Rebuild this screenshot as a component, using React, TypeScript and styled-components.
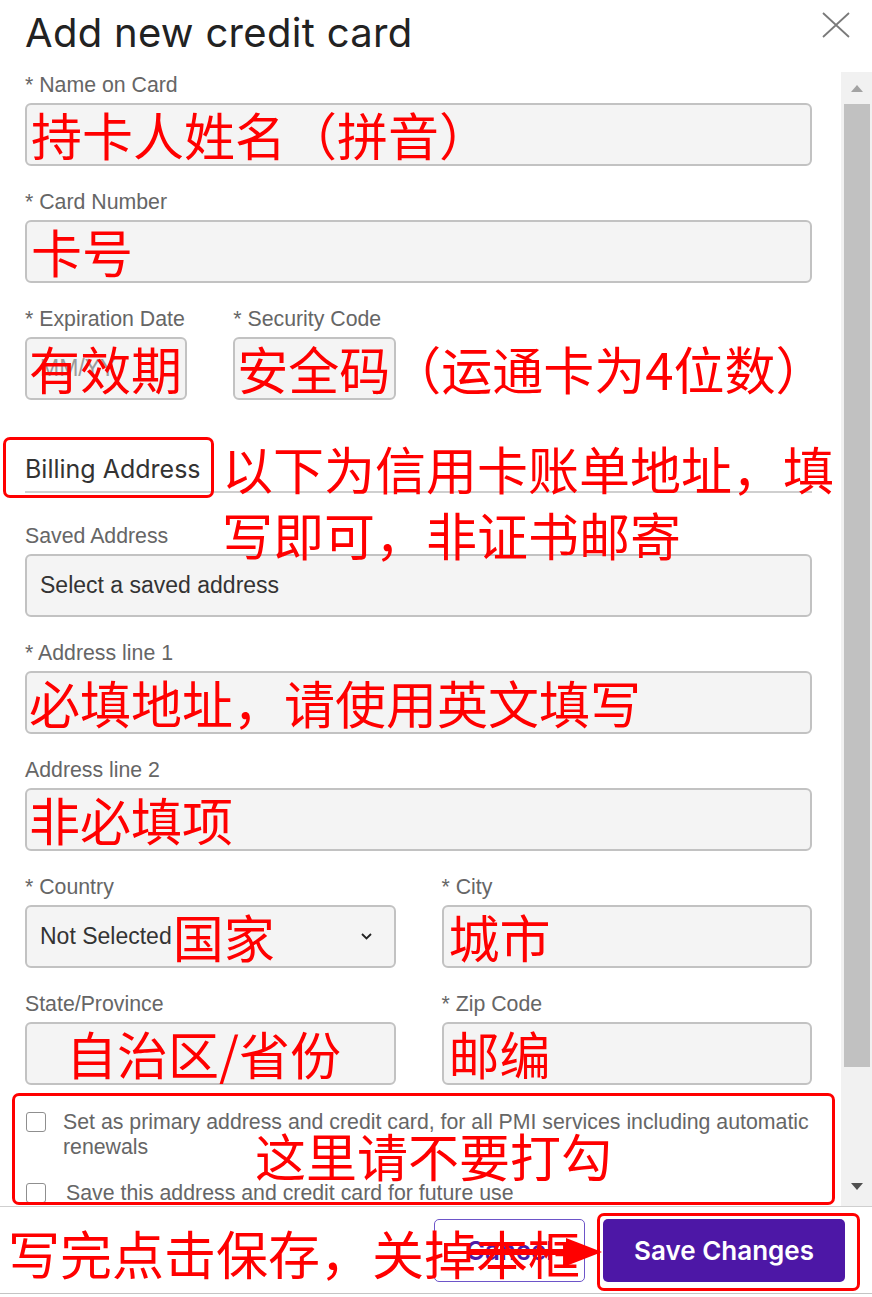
import styled, { createGlobalStyle } from "styled-components";

const RED = "#ff0000";
const CJK = `"Noto Sans CJK SC", "Noto Sans", sans-serif`;
const HEAD = `Inter, "Liberation Sans", sans-serif`;

const GlobalStyle = createGlobalStyle`
  html, body {
    margin: 0;
    padding: 0;
    background: #fff;
  }
  body {
    font-family: "Liberation Sans", Arial, sans-serif;
  }
  * {
    box-sizing: border-box;
  }
`;

const Modal = styled.div`
  width: 872px;
  height: 1297px;
  display: flex;
  flex-direction: column;
  overflow: hidden;
  background: #fff;
`;

const Header = styled.header`
  height: 72px;
  flex: none;
  display: flex;
  justify-content: space-between;
  align-items: flex-start;
  padding: 0 22px 0 25px;
`;

const Title = styled.h1`
  margin: 12px 0 0;
  font-family: ${HEAD};
  font-size: 40px;
  font-weight: 400;
  line-height: 42px;
  letter-spacing: 0.3px;
  color: #222;
`;

const CloseButton = styled.button`
  margin-top: 12px;
  width: 28px;
  height: 26px;
  padding: 0;
  border: 0;
  background: none;
  display: flex;
`;

const Body = styled.div`
  height: 1134px;
  flex: none;
  display: flex;
`;

const Content = styled.div`
  flex: 1;
  min-width: 0;
  overflow: hidden;
  padding: 1px 29px 0 25px;
`;

const Form = styled.div`
  display: grid;
  grid-template-columns: repeat(4, 1fr);
  column-gap: 46px;
  row-gap: 24px;
`;

const Field = styled.div<{ $span?: number }>`
  grid-column: span ${(p) => p.$span ?? 4};
  display: flex;
  flex-direction: column;
  min-width: 0;
`;

const Label = styled.label`
  margin-bottom: 6px;
  font-size: 21.3px;
  line-height: 24px;
  color: #666;
  white-space: nowrap;
`;

const Box = styled.div`
  position: relative;
  height: 63px;
  display: flex;
  align-items: center;
  padding: 0 2px;
  border: 2px solid #c2c2c2;
  border-radius: 6px;
  background: #f4f4f4;
  white-space: nowrap;
`;

const Value = styled.span<{ $muted?: boolean }>`
  margin-left: 11px;
  font-size: 23px;
  color: ${(p) => (p.$muted ? "#9a9a9a" : "#333")};
`;

const Note = styled.span<{ $indent?: number; $over?: boolean }>`
  margin-left: ${(p) => p.$indent ?? 2}px;
  font-family: ${CJK};
  font-size: 51px;
  line-height: 1;
  color: ${RED};
  white-space: nowrap;
  ${(p) => (p.$over ? "position: absolute; left: 0;" : "")}
`;

const Chevron = styled.svg`
  flex: none;
  margin-left: auto;
  margin-right: 20px;
`;

const Section = styled.div`
  grid-column: span 4;
  position: relative;
  z-index: 1;
  margin: 30px 0 7px;
  padding-bottom: 7px;
  border-bottom: 2px solid #cfcfcf;
`;

const SectionTitle = styled.h2`
  margin: 0;
  font-family: ${HEAD};
  font-size: 25px;
  font-weight: 400;
  line-height: 30px;
  color: #333;
`;

const Marked = styled.span<{ $inset: string }>`
  position: relative;
  display: inline-flex;
  &::after {
    content: "";
    position: absolute;
    inset: ${(p) => p.$inset};
    border: 3px solid ${RED};
    border-radius: 7px;
    pointer-events: none;
  }
`;

const SectionNote = styled.div`
  position: absolute;
  left: 197px;
  top: -19px;
  font-family: ${CJK};
  font-size: 51px;
  line-height: 66px;
  color: ${RED};
  white-space: nowrap;
`;

const CheckGroup = styled.div`
  grid-column: span 4;
  position: relative;
  margin-top: 1px;
  display: flex;
  flex-direction: column;
  gap: 21px;
  &::after {
    content: "";
    position: absolute;
    inset: -17px -23px 1px -13px;
    border: 3px solid ${RED};
    border-radius: 7px;
  }
`;

const CheckRow = styled.label<{ $shift?: number }>`
  display: flex;
  gap: ${(p) => 17 + (p.$shift ?? 0)}px;
  font-size: 21.3px;
  line-height: 25px;
  color: #666;
`;

const Checkbox = styled.span`
  flex: none;
  width: 20px;
  height: 20px;
  margin: 2px 0 0 1px;
  border: 1.5px solid #8f8f8f;
  border-radius: 3px;
  background: #fff;
`;

const CheckNote = styled.div`
  position: absolute;
  z-index: 1;
  left: 230px;
  top: 15px;
  font-family: ${CJK};
  font-size: 51px;
  line-height: 60px;
  color: ${RED};
  white-space: nowrap;
`;

const Scrollbar = styled.div`
  width: 31px;
  flex: none;
  display: flex;
  flex-direction: column;
  padding: 0 2px 0 3px;
  background: #f1f1f1;
`;

const ScrollArrow = styled.div<{ $down?: boolean }>`
  height: ${(p) => (p.$down ? 40 : 32)}px;
  flex: none;
  display: flex;
  align-items: center;
  justify-content: center;
  margin-top: ${(p) => (p.$down ? "auto" : "0")};
  &::before {
    content: "";
    border-left: 6px solid transparent;
    border-right: 6px solid transparent;
    ${(p) =>
      p.$down
        ? "border-top: 7px solid #505050;"
        : "border-bottom: 7px solid #a3a3a3;"}
  }
`;

const Thumb = styled.div`
  height: 963px;
  flex: none;
  background: #c1c1c1;
`;

const Footer = styled.footer`
  position: relative;
  height: 88px;
  flex: none;
  display: flex;
  align-items: center;
  justify-content: flex-end;
  gap: 18px;
  padding-right: 27px;
  border-top: 1px solid #cfcfcf;
  border-bottom: 1px solid #c4c4c4;
`;

const Button = styled.button<{ $primary?: boolean }>`
  height: 63px;
  width: ${(p) => (p.$primary ? 242 : 151)}px;
  border-radius: 5px;
  border: ${(p) => (p.$primary ? "0" : "1.5px solid #6d55c9")};
  background: ${(p) => (p.$primary ? "#4d17a6" : "#fff")};
  color: ${(p) => (p.$primary ? "#fff" : "#4c1ba8")};
  font-family: ${HEAD};
  font-size: 26px;
  font-weight: 600;
`;

const FooterNote = styled.div`
  position: absolute;
  left: 8px;
  top: 16px;
  font-family: ${CJK};
  font-size: 52px;
  line-height: 60px;
  color: ${RED};
  white-space: nowrap;
`;

const Arrow = styled.svg`
  position: absolute;
  left: 470px;
  top: 29px;
`;

export default function App() {
  return (
    <>
      <GlobalStyle />
      <Modal>
        <Header>
          <Title>Add new credit card</Title>
          <CloseButton aria-label="Close">
            <svg width="28" height="26" viewBox="0 0 28 26">
              <path
                d="M1 1L27 25M27 1L1 25"
                stroke="#7a7a7a"
                strokeWidth="1.8"
                fill="none"
              />
            </svg>
          </CloseButton>
        </Header>

        <Body>
          <Content>
            <Form>
              <Field>
                <Label>* Name on Card</Label>
                <Box>
                  <Note $indent={2}>持卡人姓名（拼音）</Note>
                </Box>
              </Field>

              <Field>
                <Label>* Card Number</Label>
                <Box>
                  <Note $indent={2}>卡号</Note>
                </Box>
              </Field>

              <Field $span={1}>
                <Label>* Expiration Date</Label>
                <Box>
                  <Value $muted>MM/YY</Value>
                  <Note $over>有效期</Note>
                </Box>
              </Field>

              <Field $span={1}>
                <Label>* Security Code</Label>
                <Box>
                  <Note $indent={0}>安全码（运通卡为4位数）</Note>
                </Box>
              </Field>

              <Section>
                <Marked $inset="-17px -13px -14px -22px">
                  <SectionTitle>Billing Address</SectionTitle>
                </Marked>
                <SectionNote>
                  以下为信用卡账单地址，填
                  <br />
                  写即可，非证书邮寄
                </SectionNote>
              </Section>

              <Field>
                <Label>Saved Address</Label>
                <Box>
                  <Value>Select a saved address</Value>
                </Box>
              </Field>

              <Field>
                <Label>* Address line 1</Label>
                <Box>
                  <Note $indent={0}>必填地址，请使用英文填写</Note>
                </Box>
              </Field>

              <Field>
                <Label>Address line 2</Label>
                <Box>
                  <Note $indent={0}>非必填项</Note>
                </Box>
              </Field>

              <Field $span={2}>
                <Label>* Country</Label>
                <Box>
                  <Value>Not Selected</Value>
                  <Note $indent={1}>国家</Note>
                  <Chevron width="11" height="7" viewBox="0 0 11 7">
                    <path
                      d="M1 1L5.5 5.5L10 1"
                      stroke="#222"
                      strokeWidth="1.8"
                      fill="none"
                    />
                  </Chevron>
                </Box>
              </Field>

              <Field $span={2}>
                <Label>* City</Label>
                <Box>
                  <Note $indent={3}>城市</Note>
                </Box>
              </Field>

              <Field $span={2}>
                <Label>State/Province</Label>
                <Box>
                  <Note $indent={37}>自治区/省份</Note>
                </Box>
              </Field>

              <Field $span={2}>
                <Label>* Zip Code</Label>
                <Box>
                  <Note $indent={3}>邮编</Note>
                </Box>
              </Field>

              <CheckGroup>
                <CheckRow>
                  <Checkbox />
                  <span>
                    Set as primary address and credit card, for all PMI
                    services including automatic renewals
                  </span>
                </CheckRow>
                <CheckRow $shift={3}>
                  <Checkbox />
                  <span>Save this address and credit card for future use</span>
                </CheckRow>
                <CheckNote>这里请不要打勾</CheckNote>
              </CheckGroup>
            </Form>
          </Content>

          <Scrollbar>
            <ScrollArrow />
            <Thumb />
            <ScrollArrow $down />
          </Scrollbar>
        </Body>

        <Footer>
          <Button>Cancel</Button>
          <Marked $inset="-6px -15px -9px -6px">
            <Button $primary>Save Changes</Button>
          </Marked>
          <FooterNote>写完点击保存，关掉本框</FooterNote>
          <Arrow width="132" height="32" viewBox="0 0 132 32">
            <rect x="0" y="13" width="100" height="6" fill={RED} />
            <polygon points="96,2 132,16 96,30" fill={RED} />
          </Arrow>
        </Footer>
      </Modal>
    </>
  );
}
